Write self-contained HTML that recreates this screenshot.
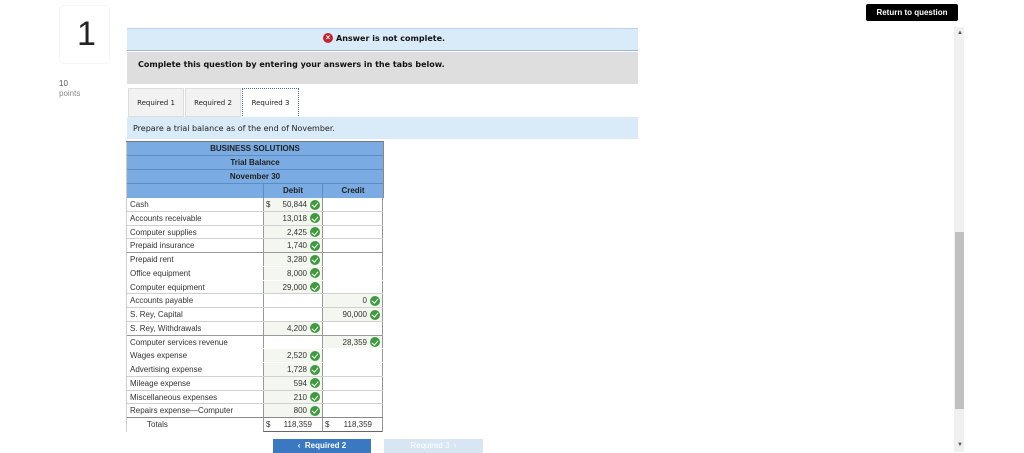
<!DOCTYPE html>
<html><head><style>
body{margin:0;width:1024px;height:452px;overflow:hidden;background:#fff;font-family:"Liberation Sans",Arial,sans-serif;position:relative}
.a{position:absolute}
.dv{font-family:"DejaVu Sans",Verdana,sans-serif}
.row{position:absolute;left:127px;width:256px;height:13.75px;font-size:8px;color:#333;border-bottom:1px solid #d0d0d0;box-sizing:border-box}
.row.nb{border-bottom-color:transparent}
.row .l{position:absolute;left:3px;top:2px}
.row .d{position:absolute;left:136px;width:60px;height:100%;border-left:1px solid #999;border-right:1px solid #999;box-sizing:border-box}
.row .c{position:absolute;left:196px;width:60px;height:100%;border-right:1px solid #999;box-sizing:border-box}
.g{background:#f3f7ef}
.v{position:absolute;right:15px;top:2px}
.ck{position:absolute;right:2px;top:1.5px;width:10px;height:10px;border-radius:50%;background:#3e9a3e}
.ck:after{content:"";position:absolute;left:3px;top:1.5px;width:2.5px;height:5px;border:solid #fff;border-width:0 1.6px 1.6px 0;transform:rotate(40deg)}
.hd{position:absolute;left:127px;width:256px;height:14px;background:#7aabe2;border-bottom:1px solid #5d8cc4;box-sizing:border-box;font-size:8px;font-weight:bold;color:#222;text-align:center;line-height:13px}
</style></head><body>
<div class="a" style="left:59px;top:5px;width:49px;height:57px;border:1px solid #f6f6f6;border-radius:4px"></div>
<div class="a" style="left:77px;top:15px;font-size:34px;color:#222">1</div>
<div class="a" style="left:59px;top:79px;font-size:8px;color:#555">10</div>
<div class="a" style="left:59px;top:89px;font-size:8px;color:#888">points</div>
<div class="a" style="left:866px;top:4px;width:92px;height:17px;background:#000;border-radius:2px;color:#fff;font-size:8px;font-weight:bold;text-align:center;line-height:17px">Return to question</div>
<div class="a" style="left:954px;top:27px;width:10px;height:425px;background:#f0f0f0"></div>
<div class="a" style="left:955px;top:232px;width:9px;height:177px;background:#c0c0c0"></div>
<div class="a" style="left:957px;top:30px;font-size:6px;color:#555">▲</div>
<div class="a" style="left:957px;top:442px;font-size:6px;color:#555">▼</div>

<div class="a" style="left:127px;top:28px;width:511px;height:21px;background:#d9ebf8;border-top:1px solid #b7d3ec;border-bottom:1px solid #9ab8d6"></div>
<div class="a" style="left:323px;top:33px;width:10px;height:10px;border-radius:50%;background:#c4262e;color:#fff;font-size:8px;line-height:10px;text-align:center;font-weight:bold">×</div>
<div class="a dv" style="left:336px;top:34px;font-size:8px;font-weight:bold;color:#111">Answer is not complete.</div>
<div class="a" style="left:127px;top:52px;width:511px;height:32px;background:#dedede"></div>
<div class="a dv" style="left:138px;top:60px;font-size:8px;font-weight:bold;color:#111">Complete this question by entering your answers in the tabs below.</div>

<div class="a dv" style="left:128px;top:88px;width:56px;height:29px;background:#f2f2f2;border:1px solid #ddd;box-sizing:border-box;font-size:7px;text-align:center;line-height:28px;color:#222">Required 1</div>
<div class="a dv" style="left:185px;top:88px;width:56px;height:29px;background:#f2f2f2;border:1px solid #ddd;box-sizing:border-box;font-size:7px;text-align:center;line-height:28px;color:#222">Required 2</div>
<div class="a dv" style="left:242px;top:88px;width:57px;height:30px;background:#fff;border:1px dotted #3a6fb5;box-sizing:border-box;font-size:7px;text-align:center;line-height:28px;color:#222">Required 3</div>
<div class="a" style="left:127px;top:117px;width:511px;height:22px;background:#d9ebf8"></div>
<div class="a dv" style="left:133px;top:124px;font-size:8px;color:#222">Prepare a trial balance as of the end of November.</div>

<div class="a" style="left:126px;top:141px;width:258px;height:1px;background:#777"></div>
<div class="hd" style="top:142px">BUSINESS SOLUTIONS</div>
<div class="hd" style="top:156px">Trial Balance</div>
<div class="hd" style="top:170px">November 30</div>
<div class="hd" style="top:184px;border-bottom:none"><span class="a" style="left:136px;width:60px;height:14px;border-left:1px solid #5d8cc4;border-right:1px solid #5d8cc4;top:0;box-sizing:border-box">Debit</span><span class="a" style="left:196px;width:60px;top:0">Credit</span></div>
<div class="a" style="left:383px;top:142px;width:1px;height:56px;background:#888"></div>
<div class="a" style="left:126px;top:142px;width:1px;height:290px;background:#ccc"></div>

<div class="row" style="top:198px"><span class="l">Cash</span><div class="d g"><span class="a" style="left:2px;top:2px">$</span><span class="v">50,844</span><i class="ck"></i></div><div class="c"></div></div>
<div class="row" style="top:211.75px"><span class="l">Accounts receivable</span><div class="d g"><span class="v">13,018</span><i class="ck"></i></div><div class="c"></div></div>
<div class="row" style="top:225.5px"><span class="l">Computer supplies</span><div class="d g"><span class="v">2,425</span><i class="ck"></i></div><div class="c"></div></div>
<div class="row" style="top:239.25px;border-bottom-color:#999"><span class="l">Prepaid insurance</span><div class="d g"><span class="v">1,740</span><i class="ck"></i></div><div class="c"></div></div>
<div class="row nb" style="top:253px"><span class="l">Prepaid rent</span><div class="d g"><span class="v">3,280</span><i class="ck"></i></div><div class="c"></div></div>
<div class="row nb" style="top:266.75px"><span class="l">Office equipment</span><div class="d g"><span class="v">8,000</span><i class="ck"></i></div><div class="c"></div></div>
<div class="row" style="top:280.5px"><span class="l">Computer equipment</span><div class="d g"><span class="v">29,000</span><i class="ck"></i></div><div class="c"></div></div>
<div class="row" style="top:294.25px"><span class="l">Accounts payable</span><div class="d"></div><div class="c g"><span class="v">0</span><i class="ck"></i></div></div>
<div class="row" style="top:308px"><span class="l">S. Rey, Capital</span><div class="d"></div><div class="c g"><span class="v">90,000</span><i class="ck"></i></div></div>
<div class="row" style="top:321.75px;border-bottom-color:#999"><span class="l">S. Rey, Withdrawals</span><div class="d g"><span class="v">4,200</span><i class="ck"></i></div><div class="c"></div></div>
<div class="row nb" style="top:335.5px"><span class="l">Computer services revenue</span><div class="d"></div><div class="c g"><span class="v">28,359</span><i class="ck"></i></div></div>
<div class="row nb" style="top:349.25px"><span class="l">Wages expense</span><div class="d g"><span class="v">2,520</span><i class="ck"></i></div><div class="c"></div></div>
<div class="row" style="top:363px"><span class="l">Advertising expense</span><div class="d g"><span class="v">1,728</span><i class="ck"></i></div><div class="c"></div></div>
<div class="row" style="top:376.75px"><span class="l">Mileage expense</span><div class="d g"><span class="v">594</span><i class="ck"></i></div><div class="c"></div></div>
<div class="row" style="top:390.5px"><span class="l">Miscellaneous expenses</span><div class="d g"><span class="v">210</span><i class="ck"></i></div><div class="c"></div></div>
<div class="row" style="top:404.25px;border-bottom:1px solid #888"><span class="l">Repairs expense—Computer</span><div class="d g"><span class="v">800</span><i class="ck"></i></div><div class="c"></div></div>
<div class="row" style="top:418px;border-bottom:none"><span class="l" style="left:20px">Totals</span><div class="d" style="border-bottom:1px solid #666"><span class="a" style="left:2px;top:2px">$</span><span class="a" style="right:10px;top:2px">118,359</span></div><div class="c" style="border-bottom:1px solid #666"><span class="a" style="left:2px;top:2px">$</span><span class="a" style="right:10px;top:2px">118,359</span></div></div>

<div class="a" style="left:273px;top:439px;width:98px;height:14px;background:#3a78c2;color:#fff;font-size:8px;text-align:center;line-height:14px;font-weight:bold">‹ &nbsp;Required 2</div>
<div class="a" style="left:384px;top:439px;width:99px;height:14px;background:#d8e5f3;color:#fff;font-size:8px;text-align:center;line-height:14px">Required 3 &nbsp;›</div>
</body></html>
